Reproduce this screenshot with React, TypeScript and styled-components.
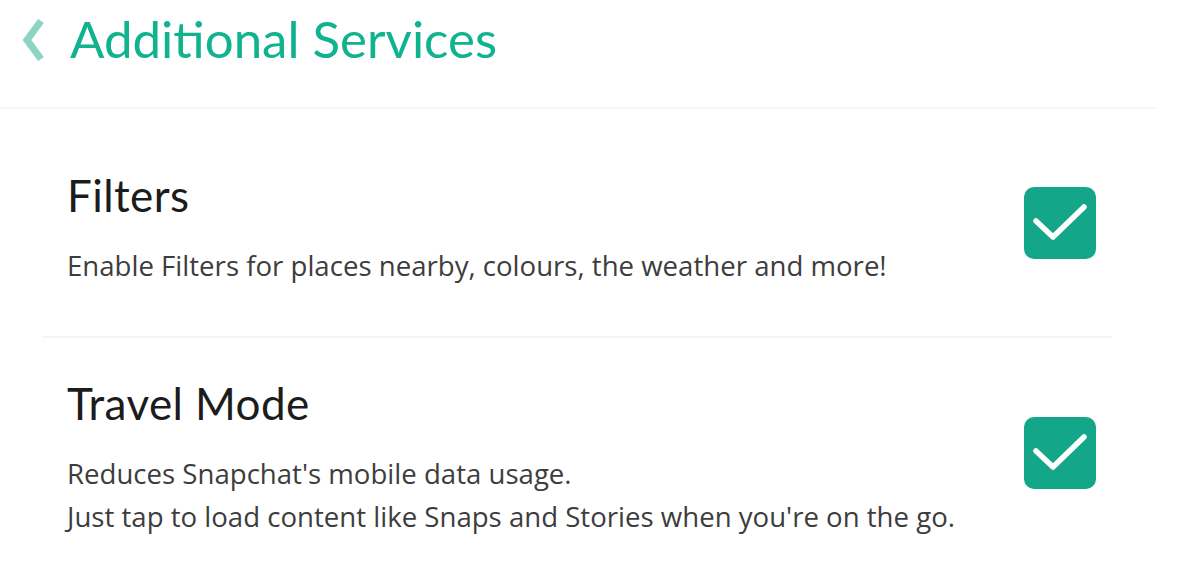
import React from "react";
import styled, { createGlobalStyle } from "styled-components";

const GlobalStyle = createGlobalStyle`
    html, body {
        margin: 0;
        padding: 0;
        background: #ffffff;
    }
    body {
        font-family: Lato, "Noto Sans", sans-serif;
        -webkit-font-smoothing: antialiased;
    }
`;

const Page = styled.div`
    width: 1191px;
    height: 564px;
    overflow: hidden;
    background: #ffffff;
`;

const Header = styled.header`
    display: flex;
    align-items: flex-start;
    gap: 24px;
    width: 1157px;
    height: 109px;
    padding: 13px 0 0 22px;
    box-sizing: border-box;
    border-bottom: 2px solid #f6f6f6;
`;

const BackIcon = styled.svg`
    width: 24px;
    height: 42px;
    margin-top: 6px;
    flex-shrink: 0;
`;

const Title = styled.h1`
    margin: 0;
    font-size: 51px;
    font-weight: 400;
    line-height: 1;
    color: #11b28e;
`;

const List = styled.div`
    display: flex;
    flex-direction: column;
`;

const Row = styled.div<{ $top: number; $bottom: number }>`
    display: flex;
    align-items: center;
    justify-content: space-between;
    padding: ${(p) => p.$top}px 95px ${(p) => p.$bottom}px 67px;
`;

const TextBlock = styled.div`
    display: flex;
    flex-direction: column;
    gap: 23px;
`;

const RowTitle = styled.div`
    font-size: 44px;
    line-height: 52px;
    color: #1c1c1c;
    letter-spacing: 0.4px;
`;

const RowDesc = styled.div`
    font-family: "Open Sans", "Noto Sans", sans-serif;
    font-size: 27.6px;
    line-height: 43px;
    color: #3d3d3d;
`;

const Divider = styled.div`
    height: 2px;
    margin: 0 79px 0 42px;
    background: #f6f6f6;
`;

const CheckBox = styled.div`
    width: 72px;
    height: 72px;
    margin-bottom: 10px;
    border-radius: 10px;
    background: #13a688;
    flex-shrink: 0;
    display: flex;
    align-items: center;
    justify-content: center;
`;

function Check() {
    return (
        <CheckBox>
            <svg width="72" height="72" viewBox="0 0 72 72">
                <path d="M12 34 L29 50 L60 20" fill="none" stroke="#ffffff" strokeWidth="5.5" strokeLinecap="round" strokeLinejoin="round" />
            </svg>
        </CheckBox>
    );
}

export default function App() {
    return (
        <Page>
            <GlobalStyle />
            <Header>
                <BackIcon viewBox="0 0 24 42">
                    <path d="M19 2 L5 21 L19 40" fill="none" stroke="#8dd5c2" strokeWidth="7" strokeLinejoin="miter" />
                </BackIcon>
                <Title>Additional Services</Title>
            </Header>
            <List>
                <Row $top={60} $bottom={49}>
                    <TextBlock>
                        <RowTitle>Filters</RowTitle>
                        <RowDesc>Enable Filters for places nearby, colours, the weather and more!</RowDesc>
                    </TextBlock>
                    <Check />
                </Row>
                <Divider />
                <Row $top={39} $bottom={20}>
                    <TextBlock>
                        <RowTitle>Travel Mode</RowTitle>
                        <RowDesc>
                            Reduces Snapchat's mobile data usage.
                            <br />
                            Just tap to load content like Snaps and Stories when you're on the go.
                        </RowDesc>
                    </TextBlock>
                    <Check />
                </Row>
            </List>
        </Page>
    );
}
